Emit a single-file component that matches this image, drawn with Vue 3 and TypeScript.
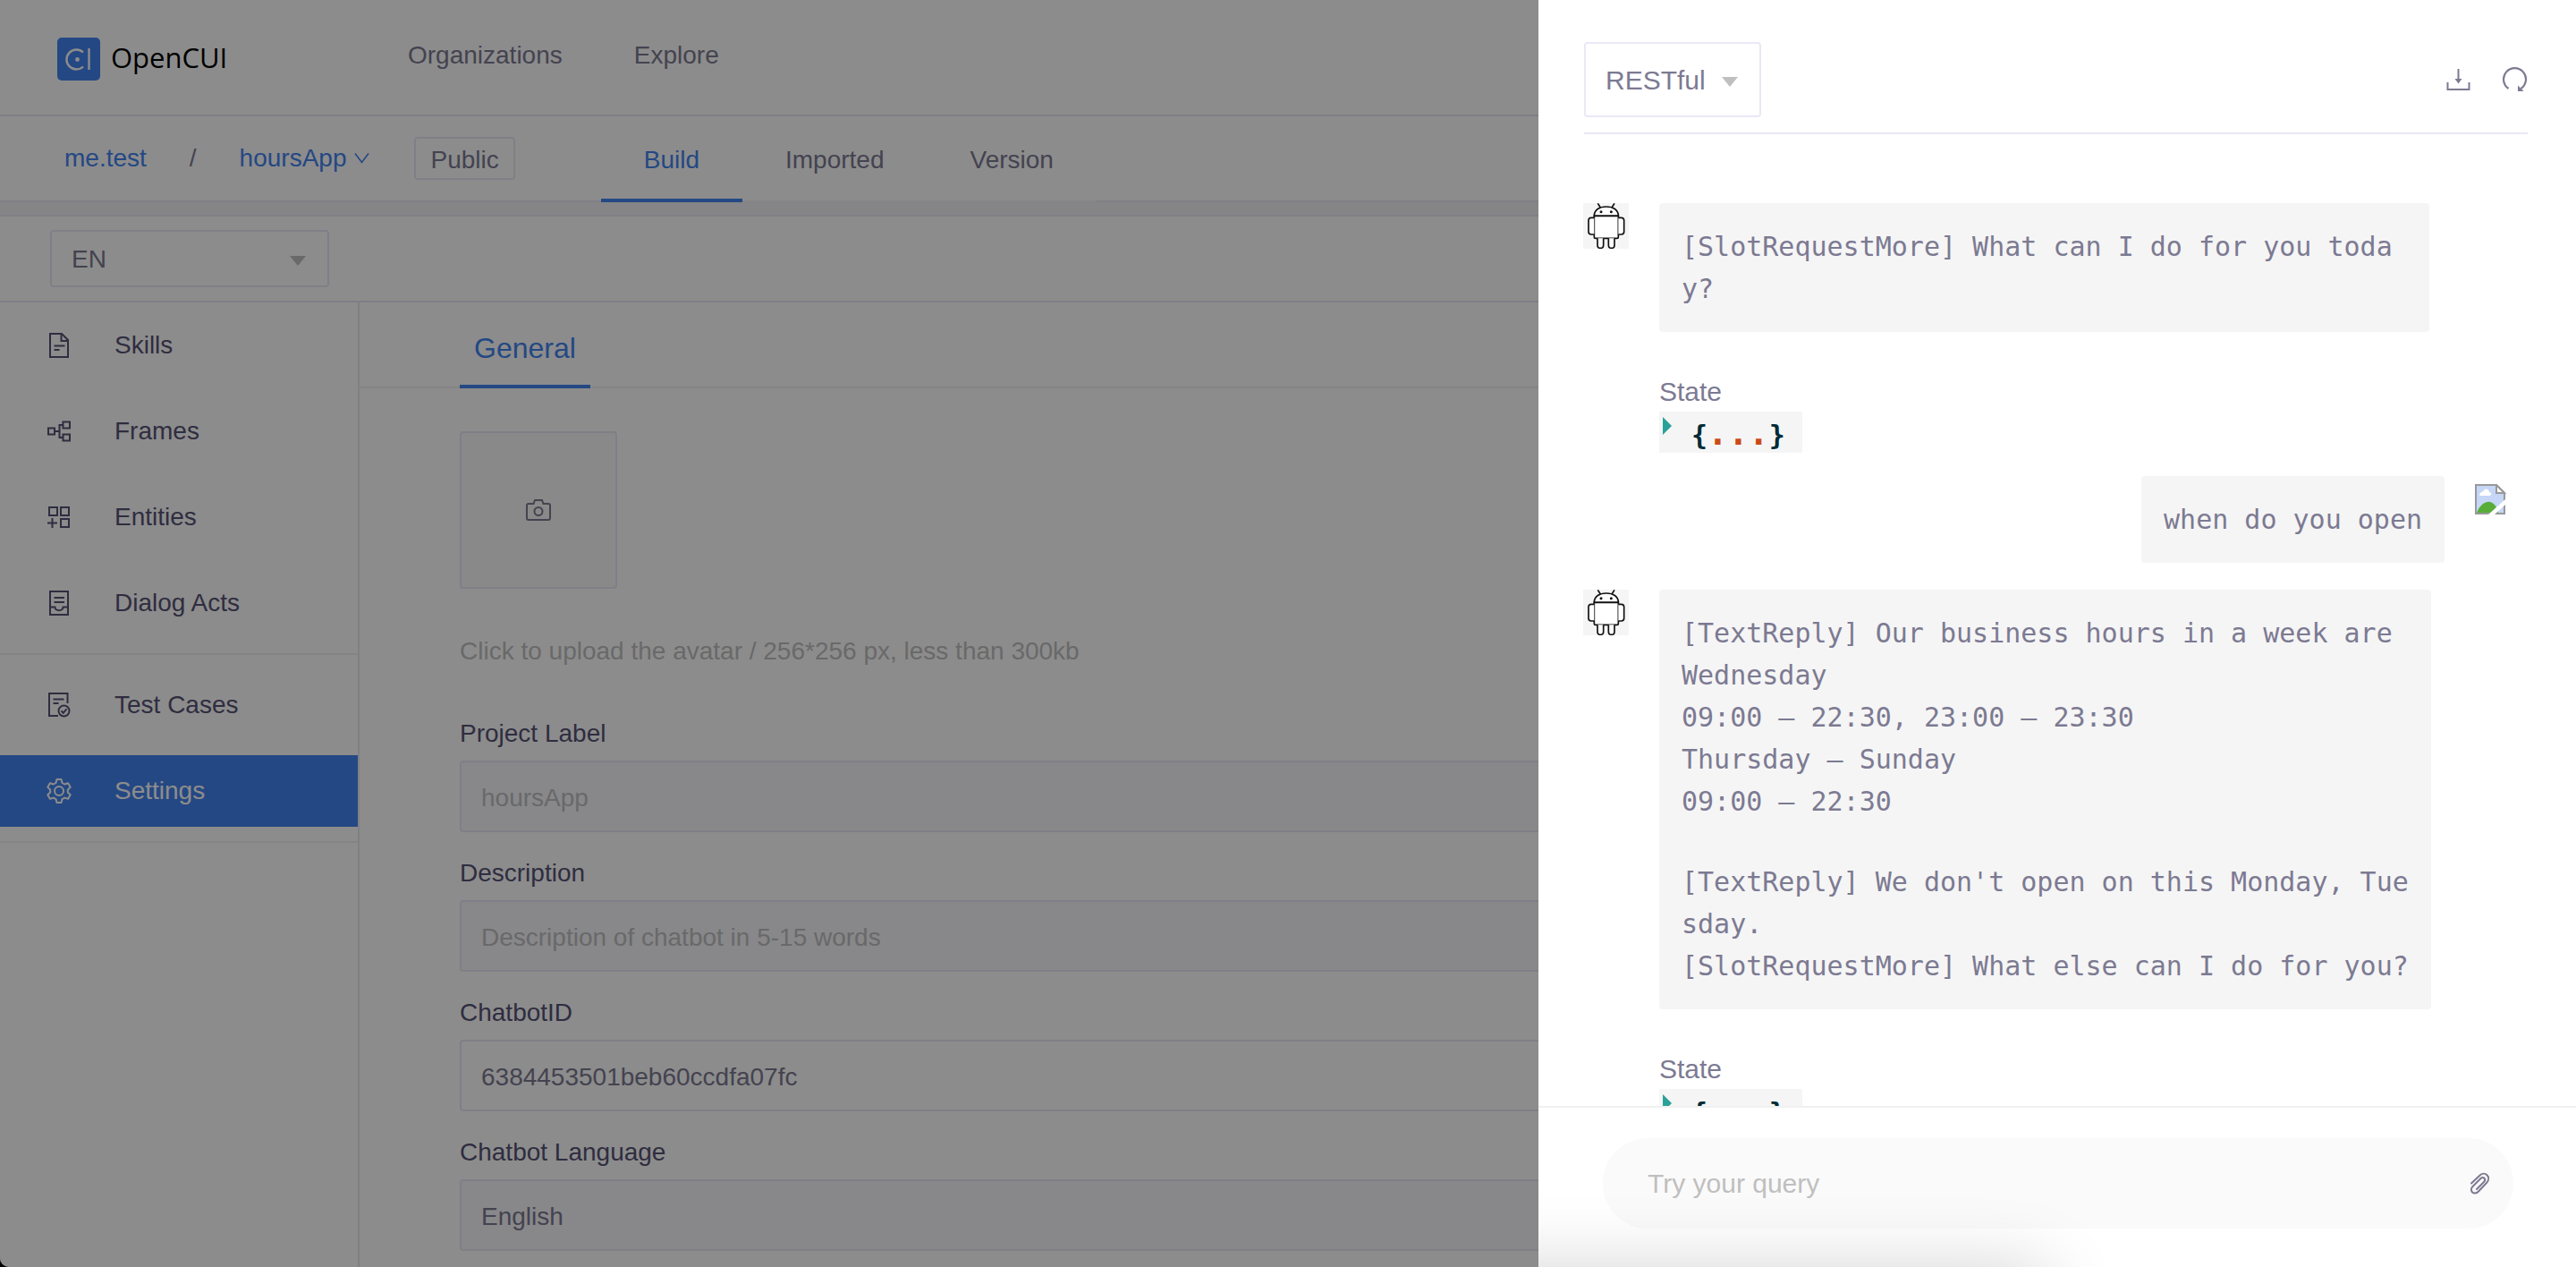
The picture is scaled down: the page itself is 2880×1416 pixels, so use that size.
<script setup lang="ts">
import { ref } from 'vue'

interface NavItem {
  label: string
  icon: string
  active?: boolean
}

interface Field {
  id: string
  label: string
  value: string
  placeholder: string
  disabled: boolean
}

const navGroups: NavItem[][] = [
  [
    { label: 'Skills', icon: 'skills' },
    { label: 'Frames', icon: 'frames' },
    { label: 'Entities', icon: 'entities' },
    { label: 'Dialog Acts', icon: 'acts' },
  ],
  [
    { label: 'Test Cases', icon: 'tests' },
    { label: 'Settings', icon: 'settings', active: true },
  ],
]

const projectTabs = ['Build', 'Imported', 'Version']
const activeTab = ref('Build')

const fields = ref<Field[]>([
  { id: 'label', label: 'Project Label', value: '', placeholder: 'hoursApp', disabled: true },
  { id: 'desc', label: 'Description', value: '', placeholder: 'Description of chatbot in 5-15 words', disabled: true },
  { id: 'bot-id', label: 'ChatbotID', value: '6384453501beb60ccdfa07fc', placeholder: '', disabled: false },
  { id: 'lang', label: 'Chatbot Language', value: 'English', placeholder: '', disabled: true },
])

interface Message {
  from: 'bot' | 'user'
  paragraphs: string[]
}

const messages: Message[] = [
  { from: 'bot', paragraphs: ['[SlotRequestMore] What can I do for you toda\ny?'] },
  { from: 'user', paragraphs: ['when do you open'] },
  {
    from: 'bot',
    paragraphs: [
      '[TextReply] Our business hours in a week are\nWednesday\n09:00 – 22:30, 23:00 – 23:30\nThursday – Sunday\n09:00 – 22:30',
      "[TextReply] We don't open on this Monday, Tue\nsday.\n[SlotRequestMore] What else can I do for you?",
    ],
  },
]

const query = ref('')
</script>

<template>
  <div class="app">
    <header class="topbar">
      <a class="logo" href="#">
        <svg width="48" height="48" viewBox="0 0 48 48" fill="none">
          <rect width="48" height="48" rx="5" fill="#4383f0" />
          <path d="M29 16.5A11 11 0 1 0 29 32.5" stroke="#fff" stroke-width="2.4" />
          <path d="M35.5 12v24" stroke="#fff" stroke-width="2.4" />
          <circle cx="22.500" cy="24.500" r="2.400" fill="#fff" />
        </svg>
        <span>OpenCUI</span>
      </a>
      <nav class="topnav">
        <a href="#">Organizations</a>
        <a href="#">Explore</a>
      </nav>
    </header>

    <div class="projectbar">
      <div class="crumbs">
        <a href="#">me.test</a>
        <span>/</span>
        <a href="#" class="project">
          hoursApp
          <svg width="18" height="14" viewBox="0 0 18 14" fill="none" stroke="currentColor" stroke-width="1.6">
            <path d="M2 1.500 9.500 11.500 17 1.500" />
          </svg>
        </a>
        <span class="badge">Public</span>
      </div>
      <div class="tabs">
        <button
          v-for="tab in projectTabs"
          :key="tab"
          type="button"
          :class="{ active: tab === activeTab }"
          @click="activeTab = tab"
        >{{ tab }}</button>
      </div>
    </div>
    <div class="strip"></div>

    <div class="toolbar">
      <div class="select lang">
        <select aria-label="Language">
          <option>EN</option>
        </select>
        <svg class="caret" width="18" height="11" viewBox="0 0 18 11"><path d="M0 0h18L9 11z" fill="#bfbfbf" /></svg>
      </div>
    </div>

    <div class="body">
      <nav class="sidebar">
        <ul v-for="(group, g) in navGroups" :key="g">
          <li v-for="item in group" :key="item.label">
            <a href="#" :class="{ active: item.active }">
              <svg width="28" height="28" viewBox="0 0 28 28" fill="none" stroke="currentColor" stroke-width="2">
                <template v-if="item.icon === 'skills'">
                  <path d="M4 1h13l7 7v19H4z" />
                  <path d="M16.500 1v8H24M8.500 14.500h12M8.500 19h6" />
                </template>
                <template v-else-if="item.icon === 'frames'">
                  <path d="M2 10.500h7v7H2zM18.500 3.500h7.500v7h-7.500zM18.500 17.500h7.500v7h-7.500z" />
                  <path d="M9 14h5.500M18 7h-3.500v14H18" />
                </template>
                <template v-else-if="item.icon === 'entities'">
                  <path d="M3 3h9v9H3zM16 3h9v9h-9zM16 16h9v9h-9z" />
                  <path d="M1 20.500h11M6.500 15v11" />
                </template>
                <template v-else-if="item.icon === 'acts'">
                  <path d="M4 1h20v26H4z" />
                  <path d="M8.500 8h11.500M8.500 13h11.500M4 18.500h5.500c0 5 9 5 9 0H24" />
                </template>
                <template v-else-if="item.icon === 'tests'">
                  <path d="M23.500 12V1H3v25h10" />
                  <path d="M7.500 7.500h12M7.500 12h6" />
                  <circle cx="19.500" cy="20.500" r="6" />
                  <path d="M16.500 20.500l2.300 2.300 3.700-4.500" />
                </template>
                <template v-else>
                  <circle cx="14" cy="14" r="5" />
                  <path
                    stroke-linejoin="round"
                    d="M11.500 1h5l1 4 2.700 1.500 3.900-1.200 2.600 4.500-2.900 2.800v2.900l2.900 2.800-2.600 4.400-3.900-1.100-2.700 1.500-1 3.900h-5l-1-3.900-2.700-1.500-3.900 1.100-2.600-4.400 2.900-2.800v-2.900L1.300 9.800l2.600-4.500 3.900 1.200L10.500 5z"
                  />
                </template>
              </svg>
              <span>{{ item.label }}</span>
            </a>
          </li>
        </ul>
      </nav>

      <main class="content">
        <div class="subtabs">
          <button type="button">General</button>
        </div>
        <form class="form" @submit.prevent>
          <button type="button" class="upload" aria-label="Upload avatar">
            <svg width="28" height="24" viewBox="0 0 28 24" fill="none" stroke="currentColor" stroke-width="2">
              <path d="M3 5h5.500l1.500-4h8l1.500 4H25q2 0 2 2v14q0 2-2 2H3q-2 0-2-2V7q0-2 2-2z" />
              <circle cx="14" cy="13.500" r="4.500" />
            </svg>
          </button>
          <p class="hint">Click to upload the avatar / 256*256 px, less than 300kb</p>
          <div v-for="f in fields" :key="f.id" class="field">
            <label :for="f.id">{{ f.label }}</label>
            <input :id="f.id" v-model="f.value" type="text" :placeholder="f.placeholder" :disabled="f.disabled" />
          </div>
        </form>
      </main>
    </div>

    <div class="mask"></div>

    <aside class="drawer">
      <div class="drawer-head">
        <div class="select channel">
          <select aria-label="Channel">
            <option>RESTful</option>
          </select>
          <svg class="caret" width="18" height="11" viewBox="0 0 18 11"><path d="M0 0h18L9 11z" fill="#bfbfbf" /></svg>
        </div>
        <div class="actions">
          <button type="button" aria-label="Download">
            <svg width="28" height="28" viewBox="0 0 28 28" fill="none" stroke="currentColor" stroke-width="2">
              <path d="M1.500 17v8h24v-8M13.500 2v14" />
              <path d="M9.500 13h8L13.500 18.500z" fill="currentColor" stroke="none" />
            </svg>
          </button>
          <button type="button" aria-label="Restart">
            <svg width="28" height="28" viewBox="0 0 28 28" fill="none" stroke="currentColor" stroke-width="2.200">
              <path d="M6.500 24A12.500 12.500 0 1 1 20.500 24" />
              <path d="M17 27v-6.500l6.500 6.500z" fill="currentColor" stroke="none" />
            </svg>
          </button>
        </div>
      </div>

      <div class="messages">
        <div v-for="(m, i) in messages" :key="i" class="message" :class="m.from">
          <svg v-if="m.from === 'bot'" class="avatar" width="51" height="51" viewBox="0 0 153 153" fill="none" stroke="#111" stroke-width="5">
            <rect width="153" height="153" fill="#f5f5f5" stroke="none" />
            <path d="M37 43C37 22 55 12 77.500 12S118 22 118 43z" fill="#fff" />
            <path d="M37 43h81v70q0 5-5 5H42q-5 0-5-5z" fill="#fff" />
            <path d="M49 1l9 14M105 1l-9 14" />
            <path d="M37 49H27q-9 0-9 9v38q0 9 9 9h10M118 49h10q9 0 9 9v38q0 9-9 9h-10" fill="#fff" />
            <path d="M48 118v22q0 11 10 11t10-11v-22M85 118v22q0 11 10 11t10-11v-22" fill="#fff" />
            <circle cx="60" cy="29" r="4.500" fill="#111" stroke="none" />
            <circle cx="94" cy="29" r="4.500" fill="#111" stroke="none" />
          </svg>
          <svg v-else class="avatar missing" width="51" height="34" viewBox="0 0 51 34" fill="none">
            <path d="M1 1h23l9 9v23H1z" fill="#c5d6f6" />
            <path d="M5 12c0-3 4-3 5-5 2-3 6-1 6 2 3 0 3 4 0 4H7q-2 0-2-1z" fill="#fff" />
            <path d="M2 32C6 22 13 19 17 20s7 4 9 12z" fill="#57ad38" />
            <path d="M1 1h23l9 9v23H1z" stroke="#999" stroke-width="2" />
            <path d="M24 1v9h9z" fill="#fff" stroke="#999" stroke-width="2" />
            <path d="M34 17 15 34h7l12-11z" fill="#fff" />
          </svg>
          <div class="column">
            <div class="bubble">
              <p v-for="(p, k) in m.paragraphs" :key="k">{{ p }}</p>
            </div>
            <div v-if="m.from === 'bot'" class="state">
              <span class="state-label">State</span>
              <button type="button" class="json" aria-label="Expand state">
                <svg width="10" height="20" viewBox="0 0 10 20"><path d="M0 0l10 10L0 20z" fill="#2aa198" /></svg>
                <span class="code">{<span class="dots">...</span>}</span>
              </button>
            </div>
          </div>
        </div>
      </div>

      <div class="composer">
        <div class="pill">
          <input v-model="query" type="text" placeholder="Try your query" aria-label="Query" />
          <button type="button" aria-label="Attach file">
            <svg width="28" height="28" viewBox="0 0 28 28" fill="none" stroke="currentColor" stroke-width="2" stroke-linecap="round">
              <path d="M5 13.500 14 5C20-1 28 6.500 22 13L13 22.500C8 28 2 21.500 6.500 17L15.500 8C18.500 5 22 9 19 12L11 20" />
            </svg>
          </button>
        </div>
      </div>
      <div class="glow"></div>
    </aside>
  </div>
</template>

<style>
body {
  background: #000;
}
</style>

<style scoped>
* {
  box-sizing: border-box;
}

.app {
  position: relative;
  display: flex;
  flex-direction: column;
  height: 100vh;
  overflow: hidden;
  background: #fff;
  border-bottom-left-radius: 10px;
  font-family: "Liberation Sans", Arial, sans-serif;
  font-size: 28px;
  line-height: 44px;
  color: #7c7a92;
}

a {
  color: inherit;
  text-decoration: none;
}

button,
input,
select {
  margin: 0;
  padding: 0;
  border: 0;
  background: none;
  font: inherit;
  color: inherit;
}

p,
ul {
  margin: 0;
  padding: 0;
  list-style: none;
}

svg {
  display: block;
  flex: none;
}

.topbar {
  display: flex;
  flex: none;
  align-items: center;
  height: 130px;
  padding: 0 64px;
  border-bottom: 2px solid #e9e8f6;
}

.logo {
  display: flex;
  align-items: center;
  gap: 12px;
  width: 392px;
  margin-top: 4px;
  font-family: "Open Sans", sans-serif;
  font-size: 31px;
  font-weight: 500;
  line-height: 40px;
  color: #000;
}

.logo span {
  padding-bottom: 4px;
}

.topnav {
  display: flex;
  gap: 80px;
  margin-bottom: 4px;
}

.projectbar {
  display: flex;
  flex: none;
  align-items: center;
  gap: 96px;
  height: 96px;
  padding-left: 72px;
  border-bottom: 2px solid #e9e8f6;
}

.crumbs {
  display: flex;
  align-items: center;
  gap: 48px;
}

.crumbs a {
  color: #4383f0;
}

.project {
  display: flex;
  align-items: center;
  gap: 8px;
}

.badge {
  height: 48px;
  margin-left: 2px;
  padding: 2px 16px 0;
  border: 2px solid #e9e8f6;
  border-radius: 4px;
}

.tabs {
  display: flex;
  align-self: stretch;
  margin-bottom: -2px;
  box-shadow: inset 0 -2px #f2f2f6;
}

.tabs button {
  padding: 2px 48px 0;
}

.tabs .active {
  color: #4383f0;
  box-shadow: inset 0 -4px #4383f0;
}

.strip {
  flex: none;
  height: 16px;
  background: #f2f2f6;
  border-bottom: 2px solid #e9e8f6;
}

.toolbar {
  display: flex;
  flex: none;
  align-items: center;
  height: 96px;
  padding-left: 56px;
  border-bottom: 2px solid #e9e8f6;
}

.select {
  position: relative;
}

.select select {
  width: 100%;
  height: 100%;
  padding: 2px 24px 0 22px;
  border: 2px solid #e9e8f6;
  border-radius: 4px;
  appearance: none;
}

.caret {
  position: absolute;
  top: 50%;
  right: 26px;
  margin-top: -3px;
  pointer-events: none;
}

.lang {
  width: 312px;
  height: 64px;
}

.body {
  display: flex;
  flex: 1;
  min-height: 0;
}

.sidebar {
  flex: none;
  width: 402px;
  padding-top: 8px;
  border-right: 2px solid #e9e8f6;
  color: #575376;
}

.sidebar ul {
  display: flex;
  flex-direction: column;
  gap: 16px;
  padding-bottom: 16px;
  border-bottom: 2px solid #f0f0f0;
}

.sidebar ul + ul {
  padding-top: 16px;
}

.sidebar a {
  display: flex;
  align-items: center;
  gap: 48px;
  height: 80px;
  padding-left: 52px;
}

.sidebar .active {
  background: #4383f0;
  color: #fff;
}

.content {
  flex: 1;
  min-width: 0;
}

.subtabs {
  display: flex;
  height: 96px;
  padding-left: 112px;
  border-bottom: 2px solid #f0f0f0;
}

.subtabs button {
  height: 96px;
  padding: 6px 16px 0;
  font-size: 32px;
  color: #4383f0;
  box-shadow: inset 0 -4px #4383f0;
}

.form {
  padding: 48px 112px;
}

.upload {
  display: flex;
  align-items: center;
  justify-content: center;
  width: 176px;
  height: 176px;
  background: #fafafa;
  border: 2px solid #e9e8f6;
  border-radius: 4px;
}

.hint {
  margin: 48px 0;
  color: #bfbfbf;
}

.field {
  margin-bottom: 24px;
}

.field label {
  display: block;
  margin-bottom: 8px;
  color: #575376;
}

.field input {
  display: block;
  width: 100%;
  height: 80px;
  padding: 4px 22px 0;
  border: 2px solid #e9e8f6;
  border-radius: 4px;
}

.field input:disabled {
  background: #f7f7fb;
}

input::placeholder {
  color: #bfbfbf;
  opacity: 1;
}

.mask {
  position: absolute;
  inset: 0;
  background: rgba(0, 0, 0, 0.45);
}

.drawer {
  position: absolute;
  top: 0;
  right: 0;
  bottom: 0;
  display: flex;
  flex-direction: column;
  width: 1160px;
  max-width: 100%;
  overflow: hidden;
  background: #fff;
  font-size: 30px;
}

.drawer-head {
  display: flex;
  flex: none;
  align-items: center;
  justify-content: space-between;
  margin: 47px 54px 0 51px;
  padding-bottom: 17px;
  border-bottom: 2px solid #e9e8f6;
}

.channel {
  width: 198px;
  height: 84px;
}

.actions {
  display: flex;
  gap: 35px;
}

.messages {
  display: flex;
  flex: 1;
  flex-direction: column;
  min-height: 0;
  padding: 77px 62px 0 50px;
  overflow: hidden;
}

.message {
  display: flex;
  flex: none;
  gap: 34px;
  margin-bottom: 26px;
}

.user {
  flex-direction: row-reverse;
  margin-bottom: 30px;
}

.missing {
  margin-top: 9px;
}

.bot .column {
  flex: 1;
  padding-right: 102px;
}

.bubble {
  display: flex;
  flex-direction: column;
  gap: 43px;
  padding: 25px;
  background: #f5f5f5;
  border-radius: 4px;
  font-family: "DejaVu Sans Mono", monospace;
  line-height: 47px;
  white-space: pre;
}

.state {
  display: flex;
  flex-direction: column;
  align-items: flex-start;
  padding-top: 45px;
}

.json {
  display: flex;
  width: 160px;
  height: 46px;
  padding: 6px 4px;
  gap: 22px;
  background: #f5f5f5;
  text-align: left;
}

.code {
  display: flex;
  align-items: baseline;
  font-family: "DejaVu Sans Mono", monospace;
  font-weight: 700;
  line-height: 36px;
  color: #002b36;
}

.dots {
  font-size: 38px;
  color: #cb4b16;
}

.composer {
  flex: none;
  padding: 34px 70px 43px 72px;
  border-top: 2px solid #f0f0f0;
}

.pill {
  display: flex;
  align-items: center;
  height: 101px;
  padding: 0 24px 0 50px;
  background: #fafafa;
  border-radius: 50px;
}

.pill input {
  flex: 1;
  min-width: 0;
}

.glow {
  position: absolute;
  top: 100%;
  right: 590px;
  left: -400px;
  height: 200px;
  border-radius: 20px;
  box-shadow: 0 0 80px rgba(0, 0, 0, 0.17);
}
</style>
